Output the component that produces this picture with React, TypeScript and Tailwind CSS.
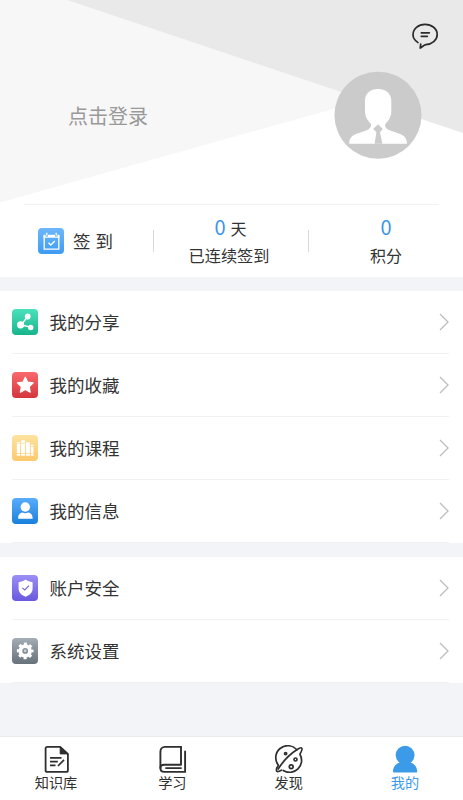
import type { ReactNode } from "react";

const shareIcon = (
  <g fill="#fff" stroke="#fff">
    <path d="M9 16 15.800 7.500M9 16l9.800 2.200" strokeWidth="1.300" />
    <circle cx="8.600" cy="15.800" r="3.600" stroke="none" />
    <circle cx="15.700" cy="7.500" r="2.900" stroke="none" />
    <circle cx="18.700" cy="18.500" r="2.700" stroke="none" />
  </g>
);

const starIcon = (
  <path
    d="m13.300 5.200 2.400 5 5.500.7-4 3.800 1 5.500-4.900-2.700-4.900 2.700 1-5.500-4-3.800 5.500-.7z"
    fill="#fff"
    stroke="#fff"
    strokeWidth="1.200"
    strokeLinejoin="round"
  />
);

const booksIcon = (
  <g fill="#fff">
    <path d="M4.800 7.200h3.300v1.200H4.800zM4.800 9.100h3.300v9H4.800zM4.800 18.800h3.300v1.900H4.800z" />
    <path d="M9 5.200h4v2.500H9zM9 8.400h4v9.700H9zM9 18.800h4v1.900H9z" />
    <path d="M13.900 7.200h4v11h-4zM13.900 18.900h4v1.800h-4z" />
    <path d="M18.800 9.800h2.700v1.500h-2.700zM18.800 12h2.700v6.400h-2.700zM18.800 19.100h2.700v1.600h-2.700z" />
  </g>
);

const personIcon = (
  <g fill="#fff">
    <circle cx="13.300" cy="9" r="4.700" />
    <path d="M6.100 20.800v-.9c0-3.300 2.200-5.100 4.300-5.300 1.800 1 4 1 5.800 0 2.200.2 4.400 2 4.400 5.300v.9z" />
  </g>
);

const shieldIcon = (
  <>
    <path
      d="M13.600 4.600c2 1.600 4.200 2.400 7 2.600v6.300c0 4-2.800 6.500-7 8.200-4.200-1.700-7-4.200-7-8.200V7.200c2.800-.2 5-1 7-2.600z"
      fill="#fff"
    />
    <path d="m10.300 12.900 2.400 2.100 4.300-4.300" fill="none" stroke="#7565dd" strokeWidth="1.100" />
  </>
);

const gearIcon = (
  <g fill="none" stroke="#fff">
    <circle cx="13.200" cy="12.900" r="4.800" strokeWidth="3.800" />
    <circle cx="13.200" cy="12.900" r="7.100" strokeWidth="2.500" strokeDasharray="3 2.576" strokeDashoffset="1.500" />
    <circle cx="13.200" cy="12.900" r="1.400" fill="#fff" fillOpacity="0.600" stroke="none" />
  </g>
);

const calendarIcon = (
  <g fill="none" stroke="#fff" strokeWidth="1.300">
    <path d="M6.200 7.300v13.900h14.600V7.300" />
    <path d="M5.600 6.700h2v1.800h2.400V6.700h7v1.800h2.400V6.700h2v3.100H5.600z" fill="#fff" stroke="none" />
    <path d="M8.800 4.800v2.800M18.200 4.800v2.800" />
    <path d="m10.500 14.800 2.300 2.200 4-4" strokeWidth="1.400" />
  </g>
);

const mainItems = [
  { label: "我的分享", icon: shareIcon, bg: "bg-linear-to-b from-[#48e2bc] to-[#15b58c]" },
  { label: "我的收藏", icon: starIcon, bg: "bg-linear-to-b from-[#f8696d] to-[#d4353d]" },
  { label: "我的课程", icon: booksIcon, bg: "bg-linear-to-b from-[#fde39f] to-[#fbc96d]" },
  { label: "我的信息", icon: personIcon, bg: "bg-linear-to-b from-[#58adfb] to-[#1580dc]" },
];

const accountItems = [
  { label: "账户安全", icon: shieldIcon, bg: "bg-linear-to-b from-[#9c8ff6] to-[#6a58de]" },
  { label: "系统设置", icon: gearIcon, bg: "bg-linear-to-b from-[#a4adb5] to-[#66717a]" },
];

function IconTile({ bg, children }: { bg: string; children: ReactNode }) {
  return (
    <span className={`block size-[26px] shrink-0 overflow-hidden rounded-[4px] ${bg}`}>
      <svg viewBox="0 0 26 26" className="size-full">
        {children}
      </svg>
    </span>
  );
}

function MenuList({ items }: { items: typeof mainItems }) {
  return (
    <ul className="bg-white">
      {items.map((item) => (
        <li key={item.label} className="mr-[14px] ml-3 flex h-[63px] items-center border-b border-[#f1f1f2] pl-[0.400px]">
          <IconTile bg={item.bg}>{item.icon}</IconTile>
          <span className="ml-[11px] text-[17.500px] leading-6 text-[#333]">{item.label}</span>
          <svg viewBox="0 0 10 18" className="ml-auto h-[18px] w-[10px]" fill="none" stroke="#bdbdbd" strokeWidth="1.300">
            <path d="m1 1 8 8-8 8" />
          </svg>
        </li>
      ))}
    </ul>
  );
}

function Header() {
  return (
    <header className="relative h-[204px] bg-white">
      <svg viewBox="0 0 463 204" className="absolute inset-0 h-[204px] w-[463px]">
        <path d="M0 0h67l298 100L0 202.500z" fill="#f7f7f7" />
        <path d="M67 0h396v133z" fill="#e9e9e9" />
      </svg>
      <div className="relative flex justify-end pt-[23px] pr-6">
        <svg viewBox="0 0 28 27" className="h-[27px] w-7" fill="none" stroke="#2b2b2b" strokeWidth="1.700" strokeLinecap="round" strokeLinejoin="round">
          <path d="M7 19.600C3.600 17.500 2 14.700 2 11.800 2 6 7.200 1.400 14 1.400s12.200 4.300 12.200 10c0 5.700-5.400 9.900-11.400 10.200-2 .6-3.400 2.200-5.600 3.500l.5-4.100" />
          <path d="M10.300 9.800h8M10.300 13.300h6" />
        </svg>
      </div>
      <div className="relative mt-[21px] flex items-center justify-between pr-[41px] pl-[68px]">
        <span className="pt-0.5 text-xl text-[#999]">点击登录</span>
        <svg viewBox="0 0 88 88" className="size-[88px]">
          <circle cx="44" cy="44.200" r="43.500" fill="#cbcbcb" />
          <path
            d="M44 18c8 0 13.300 4.500 13.300 12v10c0 6-3 10-6 13-.8 3 1.200 5 4.200 6.200l10 3.600c5 1.700 7.400 5 7.400 9.200v.7H15.200v-.7c0-4.200 2.500-7.500 7.500-9.200l10-3.600c3-1.200 4.800-3.200 4.300-6.200-3-3-6-7-6-13V30c0-7.500 5-12 13-12z"
            fill="#fff"
          />
          <path d="m44 53.300 4.800 4.600-2.800 3.300 2.400 11.500h-7.800L42.400 61.200l-3.200-3.300z" fill="#cbcbcb" />
        </svg>
      </div>
    </header>
  );
}

function CheckInBar() {
  return (
    <section className="bg-white">
      <div className="mx-6 border-t border-[#f1f1f2]" />
      <div className="flex h-[72px] items-center">
        <div className="flex w-[153px] items-center pl-[38px]">
          <IconTile bg="bg-linear-to-b from-[#6db7fb] to-[#3d9bf1]">{calendarIcon}</IconTile>
          <span className="ml-[9px] text-[17.500px] leading-6 whitespace-nowrap text-[#333] [word-spacing:1px]">签 到</span>
        </div>
        <div className="h-[22px] w-px bg-[#d8d8d8]" />
        <div className="w-[154px] pr-[4px] text-center text-[#333]">
          <p className="flex h-7 items-baseline justify-center gap-[5px] pl-[3px] leading-7">
            <span className="text-xl leading-7 text-[#3b97e5]">0</span>
            <span className="text-base leading-7">天</span>
          </p>
          <p className="h-7 text-[16.200px] leading-7">已连续签到</p>
        </div>
        <div className="h-[22px] w-px bg-[#d8d8d8]" />
        <div className="flex-1 text-center text-[#333]">
          <p className="h-7 text-xl leading-7 text-[#3b97e5]">0</p>
          <p className="h-7 text-base leading-7">积分</p>
        </div>
      </div>
    </section>
  );
}

const tabs = [
  {
    label: "知识库",
    icon: (
      <g fill="none" stroke="#2f2f2f" strokeWidth="1.800" strokeLinejoin="round">
        <path d="M19.200 1.900H6.300c-1 0-1.700.7-1.700 1.700v21.600c0 1 .7 1.700 1.700 1.700h18.900c1 0 1.700-.7 1.700-1.700V8.900z" />
        <path d="M19.200 1.900v7h7.600z" fill="#2f2f2f" strokeWidth="1" />
        <path d="M9 12.900h11.500M9 16.600h7.800M9 20.300h5.500M17 21l6-6.200" strokeWidth="1.700" />
      </g>
    ),
  },
  {
    label: "学习",
    icon: (
      <g fill="none" stroke="#2f2f2f" strokeWidth="1.900" strokeLinecap="round" strokeLinejoin="round">
        <path d="M24 1.900H8c-3 0-4.600 2.200-4.600 5V23c0 2.500 1.300 3.900 3.800 3.900h20.900V6.500" />
        <path d="M24 1.900v17.800H7.200c-2.200 0-3.800 1.400-3.800 3.200" />
        <path d="M9 23.100h15" strokeWidth="1.800" />
      </g>
    ),
  },
  {
    label: "发现",
    icon: (
      <g fill="none" stroke="#2f2f2f" strokeWidth="1.700" strokeLinecap="round" strokeLinejoin="round">
        <path d="M22.800 4.800A12 12 0 0 0 4.400 20.200c-2 3-2.300 5.300-1.500 6.100.8.700 2.500 0 4.500-1.100" />
        <path d="M9.200 25.500a12 12 0 0 0 16.700-16.300c1.700-2.700 2.600-5.300 1.700-6.200-.8-.8-2.500.3-4.800 1.800C16.500 8.800 8.500 17.200 4.200 24" />
        <circle cx="11.600" cy="8.600" r="1.100" />
        <circle cx="21.500" cy="14.500" r="1.500" />
        <circle cx="17.200" cy="21.700" r="1.900" />
      </g>
    ),
  },
  {
    label: "我的",
    active: true,
    icon: (
      <g fill="#3c9be8">
        <circle cx="15.100" cy="10.200" r="9.400" />
        <path d="M9.800 15h10.600l.2 2.500c3.800 1.300 6.600 4.700 6.600 8.800 0 .8-.4 1.300-1.200 1.300H4.200c-.8 0-1.200-.5-1.200-1.300 0-4.100 2.900-7.500 6.700-8.800z" />
      </g>
    ),
  },
];

function TabBar() {
  return (
    <nav className="mt-auto flex h-16 justify-between border-t border-[#ebebed] bg-white pr-[30px] pl-7">
      {tabs.map((tab) => (
        <a key={tab.label} className="flex w-14 flex-col items-center pt-2">
          <svg viewBox="0 0 30 28" className="h-7 w-[30px]">
            {tab.icon}
          </svg>
          <span className={`-mt-px text-[14.200px] leading-5 ${tab.active ? "text-[#3c9be8]" : "text-[#2f2f2f]"}`}>{tab.label}</span>
        </a>
      ))}
    </nav>
  );
}

export default function App() {
  return (
    <div className="flex h-[800px] w-[463px] flex-col overflow-hidden bg-[#f2f4f8] font-['Noto_Sans_CJK_SC',sans-serif]">
      <Header />
      <CheckInBar />
      <main className="mt-[14px] flex flex-col gap-[14px]">
        <MenuList items={mainItems} />
        <MenuList items={accountItems} />
      </main>
      <TabBar />
    </div>
  );
}
